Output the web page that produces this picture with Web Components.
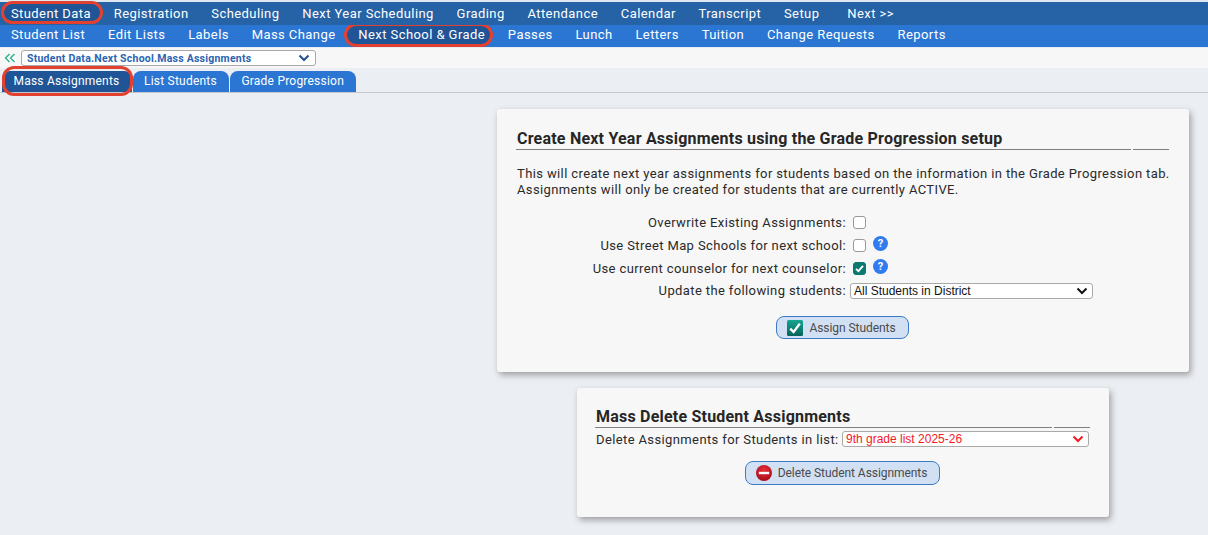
<!DOCTYPE html>
<html>
<head>
<meta charset="utf-8">
<style>
  html, body { margin: 0; padding: 0; background: #ebeef3; }
  body { font-family: Roboto, "Liberation Sans", sans-serif; height: 535px; overflow: hidden; }
</style>
</head>
<body>
<app-menu dark>
  <menu-item marked>Student Data</menu-item>
  <menu-item>Registration</menu-item>
  <menu-item>Scheduling</menu-item>
  <menu-item>Next Year Scheduling</menu-item>
  <menu-item>Grading</menu-item>
  <menu-item>Attendance</menu-item>
  <menu-item>Calendar</menu-item>
  <menu-item>Transcript</menu-item>
  <menu-item>Setup</menu-item>
  <menu-item style="margin-left:5px">Next &gt;&gt;</menu-item>
</app-menu>
<app-menu>
  <menu-item>Student List</menu-item>
  <menu-item>Edit Lists</menu-item>
  <menu-item>Labels</menu-item>
  <menu-item>Mass Change</menu-item>
  <menu-item marked>Next School &amp; Grade</menu-item>
  <menu-item>Passes</menu-item>
  <menu-item>Lunch</menu-item>
  <menu-item>Letters</menu-item>
  <menu-item>Tuition</menu-item>
  <menu-item>Change Requests</menu-item>
  <menu-item>Reports</menu-item>
</app-menu>
<crumb-bar></crumb-bar>
<tab-row>
  <tab-item active marked>Mass Assignments</tab-item>
  <tab-item>List Students</tab-item>
  <tab-item>Grade Progression</tab-item>
</tab-row>
<page-main>
  <info-card style="--w:692px;--h:263px;--pad:20px 20px 0 19px;--mb:16px">
    <card-title>Create Next Year Assignments using the Grade Progression setup</card-title>
    <p style="margin:16px 0 13.5px 1px;font-size:13px;line-height:16px;color:#2a2a2a;letter-spacing:.38px;white-space:nowrap">This will create next year assignments for students based on the information in the Grade Progression tab.<br>Assignments will only be created for students that are currently ACTIVE.</p>
    <form-row label="Overwrite Existing Assignments:"><check-box></check-box></form-row>
    <form-row label="Use Street Map Schools for next school:"><check-box></check-box><help-dot></help-dot></form-row>
    <form-row label="Use current counselor for next counselor:"><check-box checked></check-box><help-dot></help-dot></form-row>
    <form-row label="Update the following students:"><fake-select style="--sw:243px;margin-left:-1px">All Students in District</fake-select></form-row>
    <div style="display:flex;justify-content:center;margin-top:14px">
      <action-button icon="check">Assign Students</action-button>
    </div>
  </info-card>
  <info-card style="--w:532px;--h:129px;--pad:19px 19px 0 18px">
    <card-title>Mass Delete Student Assignments</card-title>
    <div style="display:flex;align-items:center;justify-content:space-between;height:20px;margin:1px 1px 0 1px;font-size:13px;color:#2a2a2a;letter-spacing:.38px;white-space:nowrap">
      Delete Assignments for Students in list:
      <fake-select red style="--sw:247px">9th grade list 2025-26</fake-select>
    </div>
    <div style="display:flex;justify-content:center;margin-top:12px">
      <action-button icon="minus" style="height:24px">Delete Student Assignments</action-button>
    </div>
  </info-card>
</page-main>

<script>
function shadow(el, html) {
  el.attachShadow({ mode: "open" }).innerHTML = html;
}

const chevron = (color, w) => `<svg width="${w}" height="8" viewBox="0 0 12 8"><path d="M1.5 1.5 6 6l4.5-4.5" fill="none" stroke="${color}" stroke-width="2"/></svg>`;

class AppMenu extends HTMLElement {
  connectedCallback() {
    const dark = this.hasAttribute("dark");
    shadow(this, `<style>
      :host { display: flex; box-sizing: border-box; align-items: center; position: relative;
        height: ${dark ? 25 : 22}px; background: ${dark ? "#2562a6" : "#2b76d3"};
        ${dark ? "border-top: 2px solid #dfe7f1; --ot: -2.5px; --ob: -.5px; --ol: 1.5px; --or: -1px; z-index: 2;" : "padding-bottom: 2px; --ot: -2px; --ob: -2px; --ol: -2.6px; --or: 3px; z-index: 1;"} }
      ::slotted(:first-child) { margin-left: -.5px; }
    </style><slot></slot>`);
  }
}

class MenuItem extends HTMLElement {
  connectedCallback() {
    shadow(this, `<style>
      :host { display: block; position: relative; z-index: 0; padding: 0 11.4px; color: #fff; font-size: 13px;
        letter-spacing: .43px; line-height: 20px; white-space: nowrap; }
      :host([marked])::after { content: ""; position: absolute; z-index: -1; left: var(--ol); right: var(--or); top: var(--ot); bottom: var(--ob);
        background: #1f5496; border: 3px solid #e2412f; border-radius: 13px; }
    </style><slot></slot>`);
  }
}

class CrumbBar extends HTMLElement {
  connectedCallback() {
    shadow(this, `<style>
      :host { display: flex; align-items: center; box-sizing: border-box; height: 21px; background: #f7f7f7;
        border-top: 1px solid #e8edf4; padding-left: 4px; gap: 5px; }
      svg.back { flex: none; }
      .sel { box-sizing: border-box; width: 295px; height: 16px; background: #fff; border: 1px solid #a9a9a9; border-radius: 3px;
        display: flex; align-items: center; justify-content: space-between; padding: 0 3px 0 5px;
        font: bold 10.5px Roboto, "Liberation Sans", sans-serif; color: #2b64b0; letter-spacing: .24px; white-space: nowrap; }
    </style>
    <svg class="back" width="12" height="10" viewBox="0 0 12 10"><path d="M5.5 1 1.5 5l4 4M10.5 1l-4 4 4 4" fill="none" stroke="#25b08f" stroke-width="1.3"/></svg>
    <div class="sel"><span>Student Data.Next School.Mass Assignments</span><span style="display:flex;margin-right:2px">${chevron("#23508f", 12)}</span></div>`);
  }
}

class TabRow extends HTMLElement {
  connectedCallback() {
    shadow(this, `<style>
      :host { display: flex; box-sizing: border-box; height: 25px; padding: 3px 0 0 2px; gap: 1px;
        background: #ebeef3; border-bottom: 1px solid #c4c6ca; align-items: stretch; }
    </style><slot></slot>`);
  }
}

class TabItem extends HTMLElement {
  connectedCallback() {
    shadow(this, `<style>
      :host { display: block; position: relative; padding: 0 12px 0 11.5px; background: #2b76d3; color: #fff; font-size: 12px;
        letter-spacing: .22px; line-height: 20px; border-radius: 8px 8px 0 0; white-space: nowrap; }
      :host([active]) { background: #1f5496; }
      :host([marked])::after { content: ""; position: absolute; left: 0; right: -1px; top: -5px; bottom: -4px;
        border: 3px solid #e2412f; border-radius: 12px; }
    </style><slot></slot>`);
  }
}

class PageMain extends HTMLElement {
  connectedCallback() {
    shadow(this, `<style>
      :host { display: flex; flex-direction: column; align-items: center; box-sizing: border-box; width: 692px;
        margin-left: 497px; padding-top: 16px; }
    </style><slot></slot>`);
  }
}

class InfoCard extends HTMLElement {
  connectedCallback() {
    shadow(this, `<style>
      :host { display: block; box-sizing: border-box; width: var(--w); height: var(--h); padding: var(--pad);
        margin-bottom: var(--mb, 0); background: #f7f7f7; border-radius: 3px;
        box-shadow: 2px 3px 6px rgba(60, 60, 60, .45); }
    </style><slot></slot>`);
  }
}

class CardTitle extends HTMLElement {
  connectedCallback() {
    shadow(this, `<style>
      :host { display: block; position: relative; padding-left: 1px; font-size: 16px; font-weight: 700; color: #262626; line-height: 20px;
        letter-spacing: .21px; border-bottom: 1px solid #808080; white-space: nowrap; }
      :host::after { content: ""; position: absolute; right: 36px; bottom: -1px; width: 2px; height: 1px; background: #f7f7f7; }
    </style><slot></slot>`);
  }
}

class FormRow extends HTMLElement {
  connectedCallback() {
    shadow(this, `<style>
      :host { display: grid; grid-template-columns: 330px 1fr; column-gap: 4px; align-items: center; height: 22.67px;
        font-size: 13px; letter-spacing: .38px; color: #2a2a2a; white-space: nowrap; }
      .label { text-align: right; }
      .field { display: flex; align-items: center; gap: 7px; padding-left: 1px; }
    </style><div class="label">${this.getAttribute("label")}</div><div class="field"><slot></slot></div>`);
  }
}

class CheckBox extends HTMLElement {
  connectedCallback() {
    const on = this.hasAttribute("checked");
    shadow(this, `<style>
      :host { display: block; box-sizing: border-box; width: 13px; height: 13px; border-radius: 3px; margin-left: 2px;
        border: 1px solid ${on ? "#0a7a70" : "#999"}; background: ${on ? "#0a7a70" : "#fff"}; }
      svg { display: block; }
    </style>${on ? `<svg width="11" height="11" viewBox="0 0 11 11"><path d="M2 5.8 4.4 8.2 9 2.8" fill="none" stroke="#fff" stroke-width="1.8"/></svg>` : ""}`);
  }
}

class HelpDot extends HTMLElement {
  connectedCallback() {
    shadow(this, `<style>
      :host { display: block; width: 15px; height: 15px; margin-top: -3px; border-radius: 50%; background: #2f7bef; color: #fff;
        font: bold 11px/15px Roboto, "Liberation Sans", sans-serif; letter-spacing: 0; text-align: center; }
    </style>?`);
  }
}

class FakeSelect extends HTMLElement {
  connectedCallback() {
    const red = this.hasAttribute("red");
    shadow(this, `<style>
      :host { display: flex; box-sizing: border-box; width: var(--sw); height: 16px; align-items: center; justify-content: space-between;
        background: #fff; border: 1px solid #a9a9a9; border-radius: 3px; padding: 0 4px 0 3px; color: ${red ? "#f5191f" : "#111"};
        font: 12px "Liberation Sans", Arial, sans-serif; letter-spacing: 0; white-space: nowrap; }
    </style><span><slot></slot></span>${chevron(red ? "#f5191f" : "#111", 12)}`);
  }
}

class ActionButton extends HTMLElement {
  connectedCallback() {
    const check = this.getAttribute("icon") === "check";
    const icon = check
      ? `<svg width="16" height="16" viewBox="0 0 16 16"><defs><linearGradient id="g" x1="0" y1="0" x2="0" y2="1"><stop offset="0" stop-color="#17a593"/><stop offset="1" stop-color="#056358"/></linearGradient></defs><rect width="16" height="16" rx="1.5" fill="url(#g)"/><path d="M3.2 8.6 6.6 12 12.8 3.6" fill="none" stroke="#fff" stroke-width="2.4"/></svg>`
      : `<svg width="16" height="16" viewBox="0 0 16 16"><defs><radialGradient id="r" cx=".5" cy=".35" r=".7"><stop offset="0" stop-color="#e8303a"/><stop offset="1" stop-color="#a30c18"/></radialGradient></defs><circle cx="8" cy="8" r="8" fill="url(#r)"/><rect x="2.8" y="6.8" width="10.4" height="2.4" fill="#fff"/></svg>`;
    shadow(this, `<style>
      :host { display: inline-flex; box-sizing: border-box; height: 23px; align-items: center; gap: 6px; padding: 0 12px 0 10px;
        background: #d2e0f3; border: 1px solid #3c7ac8; border-radius: 8px; color: #4a4a4a; font-size: 12px;
        letter-spacing: -.06px; white-space: nowrap; }
      svg { display: block; }
    </style>${icon}<slot></slot>`);
  }
}

customElements.define("app-menu", AppMenu);
customElements.define("menu-item", MenuItem);
customElements.define("crumb-bar", CrumbBar);
customElements.define("tab-row", TabRow);
customElements.define("tab-item", TabItem);
customElements.define("page-main", PageMain);
customElements.define("info-card", InfoCard);
customElements.define("card-title", CardTitle);
customElements.define("form-row", FormRow);
customElements.define("check-box", CheckBox);
customElements.define("help-dot", HelpDot);
customElements.define("fake-select", FakeSelect);
customElements.define("action-button", ActionButton);
</script>
</body>
</html>
